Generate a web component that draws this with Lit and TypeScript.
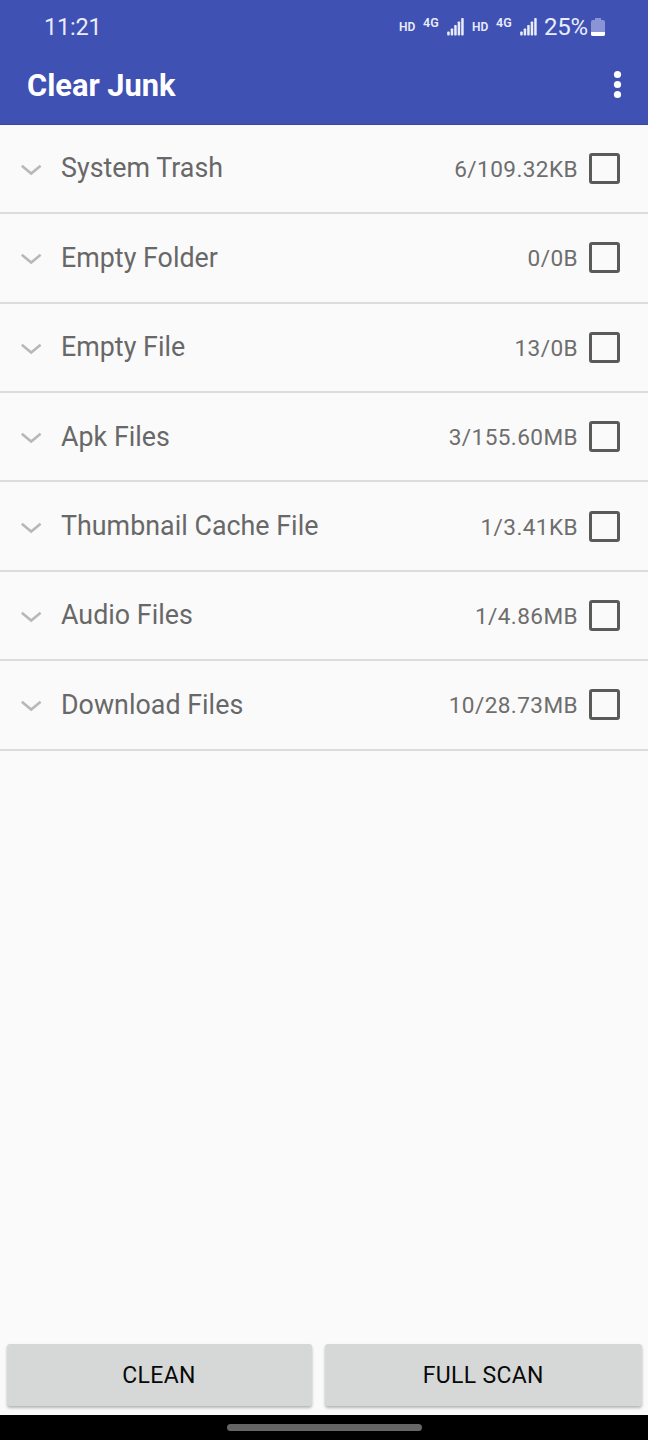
import { LitElement, html, css, svg } from "lit";
import { customElement, property } from "lit/decorators.js";

@customElement("signal-group")
class SignalGroup extends LitElement {
  static styles = css`
    :host { display: flex; height: 22px; color: #e9ecfb; font: 600 12px/14px Roboto, sans-serif; }
    .hd { width: 24px; padding-top: 4px; font-size: 12px; }
    .net { width: 23.5px; font-size: 12.5px; line-height: 13px; }
    svg { display: block; width: 17.5px; height: 22px; }
  `;
  render() {
    return html`
      <span class="hd">HD</span>
      <span class="net">4G</span>
      <svg viewBox="0 0 17.5 22" fill="currentColor">
        ${[4, 7, 10.5, 14, 17.5].map((h, i) => svg`<rect x=${0.2 + i * 3.5} y=${19.5 - h} width="2.5" height=${h} rx=".7"></rect>`)}
      </svg>`;
  }
}

@customElement("junk-row")
class JunkRow extends LitElement {
  @property() label = "";
  @property() amount = "";
  static styles = css`
    :host {
      display: flex; align-items: center; box-sizing: border-box; height: 89.4px;
      padding: 0 28px 0 20px; border-bottom: 2px solid #dcdcdc;
      font-family: Roboto, sans-serif; color: #686868;
    }
    .chevron { width: 22px; height: 14px; margin-top: 3px; }
    .label { flex: 1; margin-left: 19px; font-size: 26.8px; letter-spacing: .03px; line-height: 32px; white-space: nowrap; }
    .amount { font-size: 22.6px; letter-spacing: .4px; line-height: 28px; margin: 3px 11px 0 0; color: #6e6e6e; white-space: nowrap; }
    .box { box-sizing: border-box; width: 31px; height: 31px; border: 3px solid #5a5a5a; border-radius: 3px; }
  `;
  render() {
    return html`
      <svg class="chevron" viewBox="0 0 22 14" fill="none" stroke="#b8b8b8" stroke-width="2.6">
        <path d="M1.8 2.8 11.2 10.6 20.6 2.8"></path>
      </svg>
      <span class="label">${this.label}</span>
      <span class="amount">${this.amount}</span>
      <span class="box"></span>`;
  }
}

@customElement("app-root")
class AppRoot extends LitElement {
  static styles = css`
    :host {
      display: flex; flex-direction: column; height: 1440px; overflow: hidden;
      background: #fafafa; font-family: Roboto, sans-serif;
    }
    .top { box-sizing: border-box; height: 124.8px; background: #3f51b3; border-bottom: 1px solid #384a9f; color: #fff; }
    .status { display: flex; height: 54px; padding: 0 43px 0 44px; color: #e9ecfb; }
    .time { flex: 1; font-size: 23.5px; letter-spacing: -.2px; line-height: 54px; }
    .signals { display: flex; padding-top: 16px; gap: 8px; }
    .percent { margin-left: 7px; font-size: 24px; letter-spacing: -.2px; line-height: 54px; }
    .battery { width: 14px; height: 20px; margin: 17px 0 0 3px; }
    .bar { display: flex; align-items: center; justify-content: space-between; height: 62px; padding: 0 23px 0 27px; }
    .title { font-size: 30.8px; font-weight: 700; line-height: 36px; padding-top: 2px; }
    .more { width: 16px; height: 32px; }
    .list { flex: 1; }
    .actions { display: grid; grid-template-columns: 305px 317.5px; gap: 13px; padding: 0 0 9px 6.5px; }
    .button {
      height: 62.5px; border: 0; padding: 3px 0 0; border-radius: 3px; background: #d6d8d7; color: #080808;
      font: 400 23px/28px Roboto, sans-serif; letter-spacing: .3px; box-shadow: 0 2px 3px rgba(0, 0, 0, .28);
    }
    .nav { display: flex; justify-content: center; height: 25px; background: #000; }
    .pill { width: 195px; height: 7px; margin-top: 9px; border-radius: 4px; background: #666; }
  `;
  rows = [
    ["System Trash", "6/109.32KB"],
    ["Empty Folder", "0/0B"],
    ["Empty File", "13/0B"],
    ["Apk Files", "3/155.60MB"],
    ["Thumbnail Cache File", "1/3.41KB"],
    ["Audio Files", "1/4.86MB"],
    ["Download Files", "10/28.73MB"],
  ];
  render() {
    return html`
      <header class="top">
        <div class="status">
          <span class="time">11:21</span>
          <div class="signals"><signal-group></signal-group><signal-group></signal-group></div>
          <span class="percent">25%</span>
          <svg class="battery" viewBox="0 0 14 20">
            <path d="M4 1h6v2h2q2 0 2 2v11H0V5q0-2 2-2h2z" fill="#8b95d6"></path>
            <path d="M0 15h14v2.5q0 1.5-2 1.5H2q-2 0-2-1.5z" fill="#fff"></path>
          </svg>
        </div>
        <div class="bar">
          <span class="title">Clear Junk</span>
          <svg class="more" viewBox="0 0 16 32" fill="#fff">
            <circle cx="8.5" cy="5.5" r="3.6"></circle><circle cx="8.5" cy="15.5" r="3.6"></circle><circle cx="8.5" cy="25.5" r="3.6"></circle>
          </svg>
        </div>
      </header>
      <main class="list">
        ${this.rows.map(([label, amount]) => html`<junk-row label=${label} amount=${amount}></junk-row>`)}
      </main>
      <div class="actions">
        <button class="button">CLEAN</button>
        <button class="button">FULL SCAN</button>
      </div>
      <footer class="nav"><span class="pill"></span></footer>`;
  }
}
